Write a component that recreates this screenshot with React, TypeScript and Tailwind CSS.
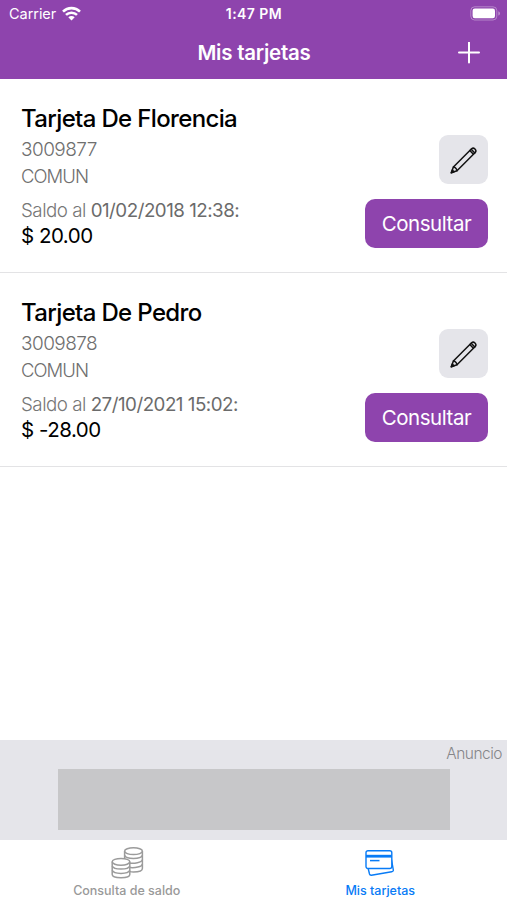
const cards = [
  { name: "Tarjeta De Florencia", number: "3009877", type: "COMUN", date: "01/02/2018 12:38:", balance: "$ 20.00" },
  { name: "Tarjeta De Pedro", number: "3009878", type: "COMUN", date: "27/10/2021 15:02:", balance: "$ -28.00" },
];

function WifiIcon() {
  return (
    <svg width="19" height="15" viewBox="0 0 19 15" fill="none" stroke="white" strokeWidth="2.6">
      <path d="M1 5.6C5.7 1 13.3 1 18 5.6" />
      <path d="M4 8.9C7 6 12 6 15 8.9" />
      <path d="M9.5 14.4L6.3 11.2C8.1 9.7 10.9 9.7 12.7 11.2Z" fill="white" stroke="none" />
    </svg>
  );
}

function BatteryIcon() {
  return (
    <svg width="31" height="15" viewBox="0 0 31 15" fill="none">
      <rect x="0.8" y="0.8" width="26" height="13.2" rx="3.8" stroke="white" strokeOpacity="0.35" />
      <rect x="2.6" y="2.6" width="22.4" height="9.6" rx="2.2" fill="white" />
      <path d="M28.3 5.2C30.6 6 30.6 8.8 28.3 9.6Z" fill="white" fillOpacity="0.4" />
    </svg>
  );
}

function PencilIcon() {
  return (
    <svg width="28" height="28" viewBox="0 0 28 28" fill="none" stroke="#111" strokeWidth="1.5" strokeLinejoin="round" strokeLinecap="round">
      <path d="M1.3 26.8L3.4 21L21.6 2.8C23.7 0.8 27.3 4.2 25.2 6.5L7 24.7Z" />
      <path d="M3.4 21C5 21 7 23 7 24.7M19.8 4.6L23.4 8.3M21.2 3.2L24.8 6.9" />
      <path d="M1.3 26.8L2.3 24.1L4 25.8Z" fill="#111" />
    </svg>
  );
}

function CoinsIcon() {
  return (
    <svg width="34" height="32" viewBox="0 0 34 32" fill="none" stroke="#9b9b9b" strokeWidth="1.5">
      <ellipse cx="23.5" cy="4.2" rx="8.9" ry="3.4" />
      <path d="M14.6 4.2V12M32.4 4.2V21.5C32.4 23.6 28.5 25 23.5 25C22 25 20.8 24.9 19.8 24.6" />
      <path d="M14.6 8.3C16 12.6 31 12.6 32.4 8.3M19.2 16.1C24 16.9 31.8 15.7 32.4 12.7M19.8 20.5C25 21 31.8 20 32.4 17.1" />
      <ellipse cx="11" cy="14.8" rx="8.8" ry="3.4" />
      <path d="M2.2 14.8V27.6C2.2 31.8 19.8 31.8 19.8 27.6V14.8" />
      <path d="M2.2 19C3.6 23.1 18.4 23.1 19.8 19M2.2 23.3C3.6 27.4 18.4 27.4 19.8 23.3" />
    </svg>
  );
}

function CardsIcon() {
  return (
    <svg width="30" height="28" viewBox="0 0 30 28" fill="none" stroke="#087bf6" strokeWidth="1.4">
      <path d="M3.2 19.5L4.5 25C4.8 26.1 5.4 26.3 6.4 26.2L26.7 22.8C27.8 22.6 28.5 21.8 28.3 20.8L26.5 10.5" />
      <rect x="1" y="1.7" width="25.8" height="17.8" rx="2" fill="white" />
      <path d="M1 7.2H26.8" strokeWidth="2.8" />
      <path d="M5 11.6H14.5" strokeWidth="1.5" />
    </svg>
  );
}

export default function App() {
  return (
    <div className="flex h-[900px] w-[507px] flex-col overflow-hidden bg-white font-['Inter','Liberation_Sans',sans-serif] text-black">
      {/* HEADER */}
      <header className="h-[79px] shrink-0 bg-[#8e44ad] text-white">
        <div className="grid h-[27px] grid-cols-[1fr_auto_1fr] items-center pr-1.5 pl-[7px]">
          <div className="flex items-center gap-1.5 pl-0.5">
            <span className="text-[14.5px] tracking-[-0.05px]">Carrier</span>
            <WifiIcon />
          </div>
          <span className="text-center text-[14px] font-semibold tracking-[0.45px]">1:47 PM</span>
          <div className="flex justify-end">
            <BatteryIcon />
          </div>
        </div>
        <div className="grid h-[52px] grid-cols-[1fr_auto_1fr] items-center pl-px">
          <span />
          <h1 className="text-[20.5px] font-semibold tracking-[-0.25px]">Mis tarjetas</h1>
          <button className="mr-[27px] justify-self-end" aria-label="Agregar">
            <svg width="22" height="22" viewBox="0 0 22 22" stroke="white" strokeWidth="2" strokeLinecap="round">
              <path d="M11 0.5V20.5M1 10.5H21" />
            </svg>
          </button>
        </div>
      </header>

      {/* CARDS */}
      <main className="flex-1">
        {cards.map((card) => (
          <section key={card.number} className="flex h-[194px] justify-between border-b border-[#e3e3e5] pt-[23px] pr-[19px] pl-[21px]">
            <div className="whitespace-nowrap">
              <h2 className="text-[24px] leading-[33px] font-medium tracking-[-0.65px]">{card.name}</h2>
              <p className="mt-px text-[19px] leading-[27px] font-light tracking-[-0.55px] text-[#6f6f6f]">{card.number}</p>
              <p className="text-[18.5px] leading-[26px] font-light tracking-[-0.95px] text-[#6f6f6f]">{card.type}</p>
              <p className="mt-[9px] text-[18.75px] leading-[26px] tracking-[-0.5px] text-[#6b6b6b]">
                <span className="font-light tracking-[-0.5px] text-[#777]">Saldo al </span>{card.date}
              </p>
              <p className="text-[20.5px] leading-[24px] tracking-[-0.5px]">{card.balance}</p>
            </div>
            <div className="flex flex-col items-end gap-3.5 pt-[33px]">
              <button className="flex size-[49px] items-center justify-center rounded-[9px] bg-[#e5e5ea]" aria-label="Editar">
                <PencilIcon />
              </button>
              <button className="mt-[0.5px] h-[49.5px] w-[123px] rounded-[10px] bg-[#8e44ad] pt-0.5 text-[20.5px] tracking-[-0.45px] text-white">Consultar</button>
            </div>
          </section>
        ))}
      </main>

      {/* AD */}
      <aside className="h-[100px] shrink-0 bg-[#e5e5ea]">
        <p className="h-[29px] pr-[5px] text-right text-[15.5px] leading-[28px] font-light tracking-[-0.5px] text-[#858589]">Anuncio</p>
        <div className="ml-[58px] h-[61px] w-[392px] bg-[#c7c7c9]" />
      </aside>

      {/* TABS */}
      <nav className="grid h-[60px] shrink-0 grid-cols-2 bg-white text-[12.5px] font-medium">
        <button className="flex flex-col items-center pt-[7px] text-[#999]">
          <CoinsIcon />
          <span className="mt-1 leading-4">Consulta de saldo</span>
        </button>
        <button className="flex flex-col items-center pt-[9px] text-[#087bf6]">
          <CardsIcon />
          <span className="mt-1.5 leading-4">Mis tarjetas</span>
        </button>
      </nav>
    </div>
  );
}
